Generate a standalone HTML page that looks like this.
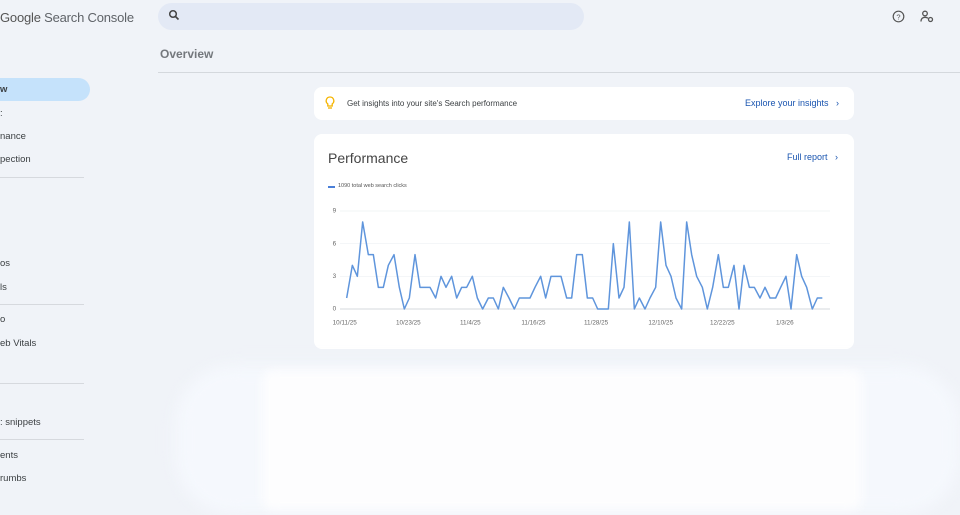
<!DOCTYPE html>
<html><head><meta charset="utf-8"><style>
*{margin:0;padding:0;box-sizing:border-box}
body{width:960px;height:502px;overflow:hidden;background:#f0f3f8;font-family:"Liberation Sans",sans-serif;position:relative;color:#444}
.abs{position:absolute}
.nav{font-size:9.5px;color:#3c4043;left:0}
.sep{left:0;width:84px;height:1px;background:#d6d9de}
.card{background:#fff;border-radius:8px}
</style></head><body>
<div class="abs" style="left:0;top:10px;font-size:13px;color:#5f6368;letter-spacing:-0.2px"><span style="color:#555">Google</span> Search Console</div>
<div class="abs" style="left:158px;top:3px;width:426px;height:27px;border-radius:14px;background:#e3e9f5"></div>
<svg class="abs" style="left:168px;top:9px" width="12" height="12" viewBox="0 0 12 12"><circle cx="5" cy="5" r="3.3" fill="none" stroke="#444" stroke-width="1.5"/><line x1="7.5" y1="7.5" x2="10.5" y2="10.5" stroke="#444" stroke-width="1.6"/></svg>
<svg class="abs" style="left:892px;top:10px" width="13" height="13" viewBox="0 0 13 13"><circle cx="6.5" cy="6.5" r="5.3" fill="none" stroke="#555" stroke-width="1.2"/><text x="6.5" y="9.3" font-size="7.5" text-anchor="middle" fill="#555" font-family="Liberation Sans">?</text></svg>
<svg class="abs" style="left:920px;top:10px" width="14" height="13" viewBox="0 0 14 13"><circle cx="5" cy="3.5" r="2.3" fill="none" stroke="#555" stroke-width="1.3"/><path d="M1 11.5c0-3 2-4.2 4-4.2s2.5.5 3 1" fill="none" stroke="#555" stroke-width="1.3"/><circle cx="10.5" cy="9.5" r="2" fill="none" stroke="#555" stroke-width="1.3"/></svg>
<div class="abs" style="left:160px;top:47px;font-size:12px;color:#5f6368;font-weight:bold;opacity:.85">Overview</div>
<div class="abs" style="left:158px;top:72px;width:802px;height:1px;background:#d4d8dd"></div>
<div class="abs" style="left:-20px;top:78px;width:110px;height:23px;border-radius:12px;background:#c5e2fb"></div>
<div class="abs nav" style="top:84px;font-weight:bold">w</div>
<div class="abs nav" style="top:108px">:</div>
<div class="abs nav" style="top:131px">nance</div>
<div class="abs nav" style="top:154px">pection</div>
<div class="abs sep" style="top:177px"></div>
<div class="abs nav" style="top:258px">os</div>
<div class="abs nav" style="top:282px">ls</div>
<div class="abs sep" style="top:304px"></div>
<div class="abs nav" style="top:314px">o</div>
<div class="abs nav" style="top:338px">eb Vitals</div>
<div class="abs sep" style="top:383px"></div>
<div class="abs nav" style="top:417px">: snippets</div>
<div class="abs sep" style="top:439px"></div>
<div class="abs nav" style="top:450px">ents</div>
<div class="abs nav" style="top:473px">rumbs</div>
<div class="abs card" style="left:314px;top:87px;width:540px;height:33px"></div>
<svg class="abs" style="left:325px;top:96px" width="10" height="14" viewBox="0 0 10 14"><path d="M5 1a3.8 3.8 0 0 0-2.2 6.9V10h4.4V7.9A3.8 3.8 0 0 0 5 1z" fill="none" stroke="#f5b400" stroke-width="1.3"/><line x1="3" y1="12" x2="7" y2="12" stroke="#f5b400" stroke-width="1.3"/></svg>
<div class="abs" style="left:347px;top:99px;font-size:8px;color:#3c4043">Get insights into your site's Search performance</div>
<div class="abs" style="left:745px;top:98px;font-size:9px;color:#1a55b0">Explore your insights&nbsp;&nbsp; ›</div>
<div class="abs card" style="left:314px;top:134px;width:540px;height:215px"></div>
<div class="abs" style="left:328px;top:150px;font-size:14px;color:#444">Performance</div>
<div class="abs" style="left:787px;top:152px;font-size:9px;color:#1a55b0">Full report&nbsp;&nbsp; ›</div>
<div class="abs" style="left:328px;top:186px;width:7px;height:2px;background:#4a7fd8"></div>
<div class="abs" style="left:338px;top:183px;font-size:5.5px;color:#555">1090 total web search clicks</div>
<svg class="abs" style="left:320px;top:200px" width="530" height="130" viewBox="0 0 1590 390">
<g stroke="#eef0f3" stroke-width="2"><line x1="60" y1="33" x2="1530" y2="33"/><line x1="60" y1="131" x2="1530" y2="131"/><line x1="60" y1="229" x2="1530" y2="229"/></g>
<line x1="60" y1="327" x2="1530" y2="327" stroke="#c8ccd2" stroke-width="2"/>
<g font-size="19" fill="#666" font-family="Liberation Sans"><text x="38" y="38">9</text><text x="38" y="136">6</text><text x="38" y="234">3</text><text x="38" y="332">0</text>
<text x="38" y="373">10/11/25</text><text x="228" y="373">10/23/25</text><text x="420" y="373">11/4/25</text><text x="604" y="373">11/16/25</text><text x="792" y="373">11/28/25</text><text x="985" y="373">12/10/25</text><text x="1170" y="373">12/22/25</text><text x="1368" y="373">1/3/26</text></g>
<polyline fill="none" stroke="#5f95dc" stroke-width="4.5" stroke-linejoin="round" points="80,294 97,196 112,229 128,66 145,164 160,164 175,262 190,262 205,196 222,164 238,262 253,327 268,294 285,164 300,262 315,262 330,262 347,294 363,229 378,262 395,229 410,294 425,262 440,262 457,229 472,294 488,327 505,294 520,294 535,327 550,262 567,294 583,327 598,294 615,294 630,294 645,262 662,229 677,294 693,229 708,229 723,229 740,294 755,294 770,164 787,164 802,294 818,294 833,327 848,327 865,327 880,131 897,294 912,262 928,66 943,327 958,294 975,327 990,294 1007,262 1022,66 1038,196 1053,229 1068,294 1085,327 1100,66 1115,164 1130,229 1147,262 1162,327 1178,262 1195,164 1210,262 1225,262 1242,196 1257,327 1272,196 1288,262 1303,262 1320,294 1335,262 1350,294 1367,294 1382,262 1398,229 1413,327 1430,164 1445,229 1460,262 1477,327 1492,294 1507,294"/>
</svg>
<div class="abs" style="left:175px;top:365px;width:785px;height:150px;border-radius:60px;background:#f5f8fd;filter:blur(8px)"></div>
<div class="abs" style="left:262px;top:370px;width:600px;height:140px;border-radius:10px;background:#fdfdfe;filter:blur(5px)"></div>
</body></html>
